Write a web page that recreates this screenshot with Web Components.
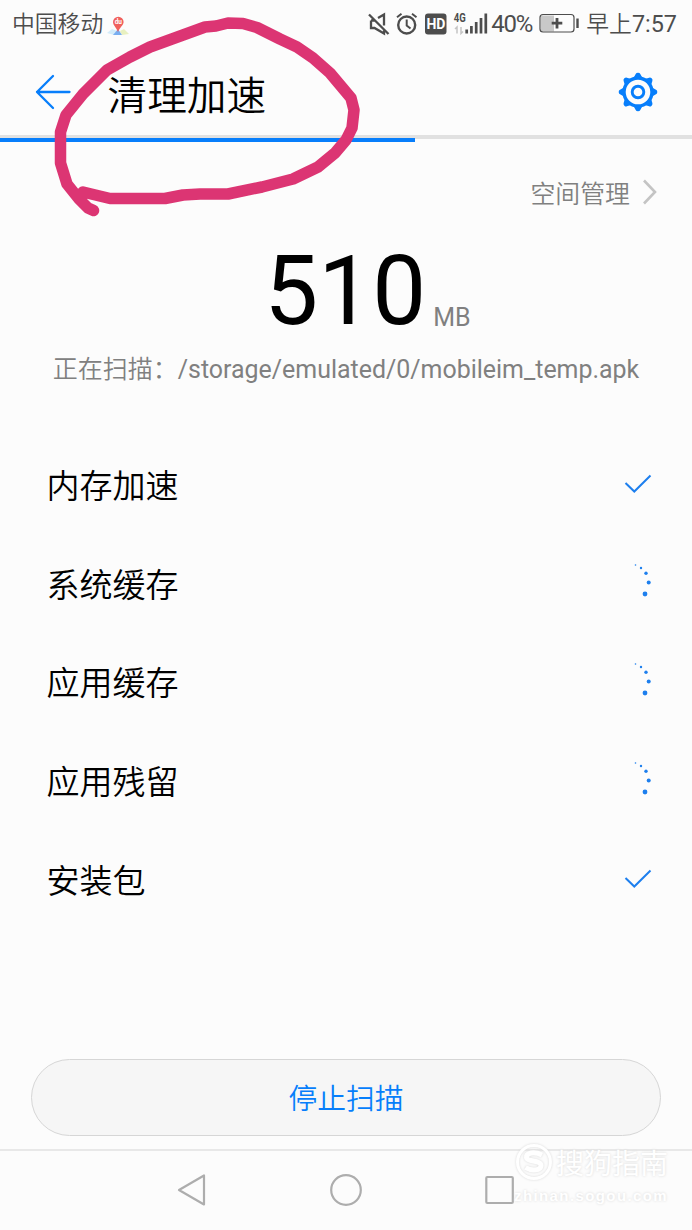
<!DOCTYPE html>
<html lang="zh-CN">
<head>
<meta charset="utf-8">
<title>清理加速</title>
<style>
  html, body { margin: 0; height: 100%; }
  body {
    background: #fcfcfc;
    color: #000;
    font-family: Roboto, "Noto Sans CJK SC", sans-serif;
    overflow: hidden;
  }
</style>
</head>
<body>
<cleaner-app></cleaner-app>

<script>
(function(){

  // registers an element whose shadow root is cloned from the markup
  function define(name, html) {
    const template = document.createElement("template");
    template.innerHTML = html;
    window.customElements.define(name, class extends HTMLElement {
      constructor() {
        super();
        this.attachShadow({ mode: "open" });
        this.shadowRoot.appendChild(document.importNode(template.content, true));
      }
    });
  }

  define("status-bar", `
  <style>
  :host{
    display:flex;
    align-items:center;
    height:47px;
    padding:2px 15px 0 12px;
    box-sizing:border-box;
    color:#4d4d4d;
    line-height:46px;
    white-space:nowrap;
  }
  svg{ display:block; flex:none; }
  .carrier{ font-size:22.8px; font-weight:350; }
  .map{ margin-left:3px; }
  .right{ display:flex; align-items:center; margin-left:auto; }
  .clock{ margin-left:7px; font-size:23.4px; }
  .clock span{ font-size:22.8px; font-weight:350; }
  </style>
  <span class="carrier">中国移动</span>
  <svg class="map" width="24" height="24" viewBox="0 0 24 24">
    <path d="M1 20 L6 16 L11 18 L8 22Z" fill="#d4ecfa"/>
    <path d="M14 18 L18 16 L23 21 L16 22Z" fill="#e8f0c0"/>
    <path d="M7 22 L12 16 L16 22Z" fill="#79aef0"/>
    <path d="M12 19 C10 14 7 12 7 9 A5.3 5.3 0 0 1 17.6 9 C17.6 12 14 14 12 19Z" fill="#f0605c"/>
    <text x="12.300" y="11" text-anchor="middle" fill="#fff" font-size="6.500" font-weight="700">du</text>
  </svg>
  <div class="right">
    <svg width="211" height="46" viewBox="369 1.500 211 46" fill="none" stroke="#4d4d4d" stroke-width="2">
      <path d="M370 14 L389.500 33.500 M372 20 V27.500 H375.500 L385 33 V30 M372 20 H375.500 M379 17.500 L385 14 V25" stroke-width="2.300"/>
      <circle cx="407.700" cy="24.500" r="8.500" stroke-width="2.400"/>
      <path d="M407.700 19 V25 L411.500 28 M398 16.800 L402.500 13.300 M413 13.300 L417.500 16.800"/>
      <rect x="426" y="13" width="21.500" height="21" rx="3" fill="#4d4d4d" stroke="none"/>
      <text x="436.900" y="28.500" text-anchor="middle" fill="#fff" stroke="none" font-size="14" font-weight="700">HD</text>
      <text x="454.700" y="21.500" fill="#4d4d4d" stroke="none" font-size="12.500" font-weight="700" textLength="12" lengthAdjust="spacingAndGlyphs">4G</text>
      <path d="M458 33 V26.500 L456 28.500 M462 26.500 V33 L464 31" stroke="#c4c4c4" stroke-width="1.500"/>
      <path d="M467.700 29 V33 M472.400 25.500 V33 M477.200 21.500 V33 M482 17.500 V33 M486.800 13 V33" stroke-width="2.700"/>
      <text x="492.300" y="31" fill="#4d4d4d" stroke="none" font-size="24" textLength="42">40%</text>
      <rect x="542" y="15" width="13" height="16" fill="#c8c8c8" stroke="none"/>
      <rect x="541" y="14" width="34" height="17.500" rx="3" stroke-width="1.200"/>
      <path d="M578.500 18 V27.500" stroke-width="2.400"/>
      <path d="M558 17.500 V28 M552.700 22.700 H563.300" stroke-width="2.800"/>
    </svg>
    <div class="clock"><span>早上</span>7:57</div>
  </div>
  `);

  define("title-bar", `
  <style>
  :host{
    display:flex;
    align-items:center;
    height:88px;
    padding:2px 34px 0 35px;
    box-sizing:border-box;
  }
  svg{ display:block; }
  .title{
    flex:1;
    margin:9px 0 0 36.5px;
    font-size:39.7px;
    line-height:56px;
    font-weight:350;
  }
  </style>
  <svg width="36" height="36" viewBox="0 0 36 36" fill="none" stroke="#077efb" stroke-width="2.3" stroke-linecap="round" stroke-linejoin="round">
    <path d="M18 2 L2 18 L18 34 M2 18 H34.500"/>
  </svg>
  <div class="title"><slot></slot></div>
  <svg width="40" height="40" viewBox="-20 -20 40 40" fill="none" stroke="#077efb">
    <circle r="14" stroke-width="3.400"/>
    <circle r="5.800" stroke-width="2.900"/>
    <g id="teeth" fill="#077efb" stroke="none"></g>
  </svg>
  `);

  define("scan-progress", `
  <style>
  :host{ display:block; height:8px; background:linear-gradient(#e1e1e1, #e1e1e1) 0 0 / 100% 4px no-repeat; }
  .bar{ position:relative; top:3px; width:60%; height:4px; background:#077efb; }
  </style>
  <div class="bar"></div>
  `);

  define("space-link", `
  <style>
  :host{
    display:flex;
    justify-content:flex-end;
    align-items:center;
    height:38px;
    padding:30px 34px 0 0;
    color:#808080;
    font-size:24.9px;
    line-height:38px;
    font-weight:350;
  }
  .label{ margin-top:6px; }
  svg{ display:block; margin-left:12px; }
  </style>
  <span class="label"><slot></slot></span>
  <svg width="16" height="26" viewBox="0 0 16 26" fill="none" stroke="#c4c4c4" stroke-width="2.6"><path d="M2 1.500 L13 13 L2 24.500"/></svg>
  `);

  define("scan-summary", `
  <style>
  :host{ display:block; }
  .size{
    display:flex;
    justify-content:center;
    align-items:baseline;
    height:133px;
    line-height:161px;
    font-size:96px;
    padding-left:43px;
  }
  .unit{ margin-left:7px; font-size:25px; line-height:28px; color:#808080; transform:translateY(1.5px); }
  .path{
    display:flex;
    justify-content:center;
    margin-top:9px;
    color:#808080;
    font-size:25px;
    line-height:34px;
    white-space:nowrap;
  }
  .label{ font-weight:350; }
  .file{ font-size:24.95px; }
  </style>
  <div class="size"><slot name="value"></slot><span class="unit"><slot name="unit"></slot></span></div>
  <div class="path"><span class="label">正在扫描：</span><span class="file"><slot name="file"></slot></span></div>
  `);

  define("scan-item", `
  <style>
  :host{
    display:flex;
    align-items:center;
    justify-content:space-between;
    height:98.6px;
    padding:0 40px 0 46.5px;
    font-size:33px;
    font-weight:350;
  }
  svg{ display:none; }
  :host([state="done"]) .done, :host([state="busy"]) .busy{ display:block; }
  .busy{ margin-bottom:3px; }
  </style>
  <span><slot></slot></span>
  <svg class="done" width="28" height="20" viewBox="0 0 28 20" fill="none" stroke="#1d7fee" stroke-width="2"><path d="M1.500 9 L10.300 17.500 L26.500 1.500"/></svg>
  <svg class="busy" width="28" height="40" viewBox="0 0 28 40" fill="#1d7fee">
    <circle cx="11.500" cy="4" r=".8"/>
    <circle cx="17" cy="7" r="1.200"/>
    <circle cx="22" cy="12.300" r="1.700"/>
    <circle cx="24.700" cy="21.500" r="2"/>
    <circle cx="21" cy="33" r="2.400"/>
  </svg>
  `);

  define("stop-button", `
  <style>
  :host{
    display:flex;
    align-items:center;
    justify-content:center;
    height:77px;
    margin:0 31px;
    padding-bottom:2px;
    box-sizing:border-box;
    border:1px solid #d6d6d6;
    border-radius:39px;
    background:#f6f6f6;
    color:#077efb;
    font-size:28.8px;
    font-weight:350;
  }
  </style>
  <slot></slot>
  `);

  define("nav-bar", `
  <style>
  :host{
    display:flex;
    justify-content:center;
    align-items:center;
    gap:122px;
    height:81px;
    padding-bottom:1px;
    box-sizing:border-box;
    border-top:2px solid #e8e8e8;
  }
  svg{ display:block; }
  </style>
  <svg width="32" height="34" viewBox="0 0 32 34" fill="none" stroke="#adadad" stroke-width="2.2" stroke-linejoin="round"><path d="M3 17 L28 2.500 V31.500Z"/></svg>
  <svg width="32" height="34" viewBox="0 0 32 34" fill="none" stroke="#adadad" stroke-width="2.2"><circle cx="16" cy="17" r="14.800"/></svg>
  <svg width="32" height="34" viewBox="0 0 32 34" fill="none" stroke="#adadad" stroke-width="2.2"><rect x="2.300" y="4" width="26.500" height="26" rx="1"/></svg>
  `);

  // hand drawn loop round the title
  define("marker-stroke", `
  <style>
  :host{ position:absolute; left:0; top:0; pointer-events:none; }
  svg{ display:block; }
  </style>
  <svg width="380" height="230" viewBox="0 0 380 230" fill="none" stroke="#dc3573" stroke-width="11.5" stroke-linecap="round" stroke-linejoin="round">
    <path d="M83 192 L110 198.500 L165 198.500 L183 195 L200 194 L228 194 L262 187 L293 179 L318 167 L335 153 L346 140 L352 128 L354 110 L351 98 L330 73 L313 58 L297 47 L280 39 L257 27.500 L243 23.500 L228 23 L216 26 L205 27 L183 35 L150 47 L130 57 L107 70 L83 94 L66 115 L60.500 132 L60.500 163 L67 184 L79 199 L88 208 L93.500 210.500"/>
  </svg>
  `);

  define("site-watermark", `
  <style>
  :host{
    position:absolute;
    left:514px;
    top:1141px;
    color:#fff;
    text-shadow:0 0 3px #d8d8d8;
    white-space:nowrap;
  }
  .row{ display:flex; align-items:center; gap:2px; height:42px; font-size:28px; }
  svg{ display:block; filter:drop-shadow(0 0 1px #d8d8d8); }
  .url{ margin-top:3px; font:700 15px/20px "Liberation Sans", sans-serif; letter-spacing:1.4px; }
  </style>
  <div class="row">
    <svg width="40" height="40" viewBox="0 0 40 40" fill="none" stroke="#fff"><circle cx="20" cy="20" r="16.500" stroke-width="3"/><path d="M28 13 C20 9 12 11 12.500 15.500 C13 20 27 18 27 23.500 C27 29 17 29 11.500 25.500" stroke-width="5"/></svg>
    <span>搜狗指南</span>
  </div>
  <div class="url">zhinan.sogou.com</div>
  `);

  define("cleaner-app", `
  <style>
  :host{ display:flex; flex-direction:column; height:1230px; position:relative; overflow:hidden; }
  .list{ margin-top:48px; }
  stop-button{ margin-top:auto; margin-bottom:13px; }
  </style>
  <status-bar></status-bar>
  <title-bar>清理加速</title-bar>
  <scan-progress></scan-progress>
  <space-link>空间管理</space-link>
  <scan-summary>
    <span slot="value">510</span>
    <span slot="unit">MB</span>
    <span slot="file">/storage/emulated/0/mobileim_temp.apk</span>
  </scan-summary>
  <div class="list">
    <scan-item state="done">内存加速</scan-item>
    <scan-item state="busy">系统缓存</scan-item>
    <scan-item state="busy">应用缓存</scan-item>
    <scan-item state="busy">应用残留</scan-item>
    <scan-item state="done">安装包</scan-item>
  </div>
  <stop-button>停止扫描</stop-button>
  <nav-bar></nav-bar>
  <marker-stroke></marker-stroke>
  <site-watermark></site-watermark>
  `);

  // gear teeth, one every 45 degrees
  const bar = document.querySelector("cleaner-app").shadowRoot.querySelector("title-bar");
  const teeth = bar.shadowRoot.getElementById("teeth");
  for (let i = 0; i < 8; i++) {
    const tooth = document.createElementNS("http://www.w3.org/2000/svg", "path");
    tooth.setAttribute("d", "M-4.500 -14 L-2.300 -18 Q-1.800 -19.300 0 -19.300 Q1.800 -19.300 2.300 -18 L4.500 -14Z");
    tooth.setAttribute("transform", "rotate(" + i * 45 + ")");
    teeth.appendChild(tooth);
  }

})();
</script>
</body>
</html>
